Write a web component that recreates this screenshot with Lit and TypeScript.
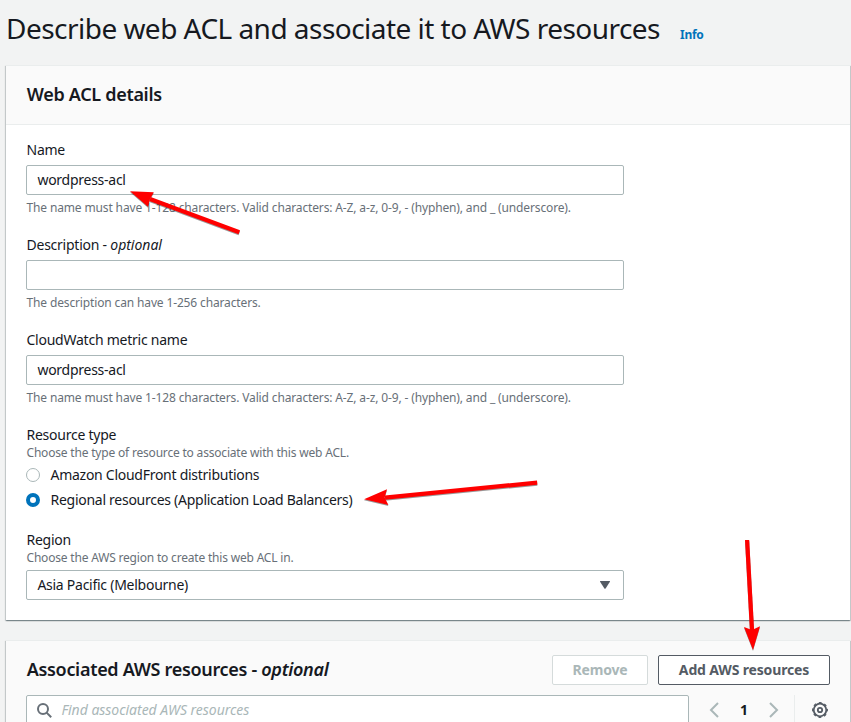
import { LitElement, html, css, svg, nothing } from "lit";
import { customElement, property, state } from "lit/decorators.js";
import { classMap } from "lit/directives/class-map.js";

@customElement("form-field")
class FormField extends LitElement {
  @property() label = "";
  @property({ type: Boolean }) optional = false;
  @property() description = "";
  @property() constraint = "";

  static styles = css`
    :host { display: block; width: 598px; }
    .label { font-size: 14px; line-height: 20px; letter-spacing: -0.24px; text-indent: 0.5px; }
    .optional { font-style: italic; letter-spacing: -0.02px; }
    .note { font-size: 12px; line-height: 15px; letter-spacing: -0.19px; text-indent: 0.5px; color: #687078; }
    .control { display: flex; flex-direction: column; margin-top: 5px; }
    .constraint { margin-top: 5px; letter-spacing: -0.14px; }
  `;

  render() {
    return html`
      <div class="label">${this.label}${this.optional ? html` - <span class="optional">optional</span>` : nothing}</div>
      ${this.description ? html`<div class="note">${this.description}</div>` : nothing}
      <div class="control"><slot></slot></div>
      ${this.constraint ? html`<div class="note constraint">${this.constraint}</div>` : nothing}
    `;
  }
}

const arrows = [
  { shaft: "M150 199 L239.3 232.2", head: "M130 191.3 L153.8 192.3 L150 199 L148 206.8 Z" },
  { shaft: "M385 497.6 L537.2 482.6", head: "M364 499.3 L387 489.2 L384.6 497.6 L388.4 505 Z" },
  { shaft: "M747.1 540 L752 630", head: "M753 650 L744 627 L752 630 L760 626.2 Z" },
];

@customElement("app-root")
export class AppRoot extends LitElement {
  @state() private resourceType = 1;

  static styles = css`
    :host {
      display: block; position: relative; box-sizing: border-box;
      width: 851px; height: 722px; overflow: hidden;
      background: #f2f3f3; color: #16191f;
      font-family: "Noto Sans", "Open Sans", sans-serif; font-size: 14px; line-height: 20px;
    }
    .page-title { display: flex; align-items: baseline; gap: 20px; padding: 10px 6px 19px; }
    h1 { margin: 0; font-size: 28px; line-height: 36px; font-weight: 400; letter-spacing: -0.53px; }
    .info { color: #0073bb; font-size: 12px; font-weight: 700; letter-spacing: -0.25px; }
    .card {
      margin: 0 1px 20px 6px; background: #fff; border-top: 1px solid #eaeded;
      box-shadow: 0 1px 1px 0 rgba(0,28,36,.3), 1px 1px 1px 0 rgba(0,28,36,.15), -1px 1px 1px 0 rgba(0,28,36,.15);
    }
    .head { box-sizing: border-box; height: 59px; padding: 14px 20px; background: #fafafa; border-bottom: 1px solid #eaeded; }
    h2 { margin: 0; font-size: 18px; line-height: 28px; font-weight: 600; letter-spacing: -0.31px; text-indent: 0.7px; }
    .body { display: flex; flex-direction: column; gap: 20px; padding: 15px 20px 20px; }
    .input {
      box-sizing: border-box; height: 30px; border: 1px solid #aab7b8; border-radius: 2px; background: #fff;
      padding: 4px 10px; letter-spacing: -0.26px; text-indent: 0.4px; display: flex; align-items: center; justify-content: space-between;
    }
    .caret { width: 10px; height: 8px; margin-right: 3px; fill: #545b64; }
    .radios { display: flex; flex-direction: column; gap: 5px; }
    .radio { display: flex; align-items: center; gap: 10.5px; height: 20px; letter-spacing: -0.27px; }
    .dot { box-sizing: border-box; width: 14px; height: 14px; border: 1px solid #aab7b8; border-radius: 50%; background: #fff; }
    .dot.on { border: 4px solid #0073bb; }
    .table { background: #fafafa; padding: 14px 20px 20px; }
    .row { display: flex; justify-content: space-between; }
    .buttons { display: flex; gap: 10px; }
    .button {
      box-sizing: border-box; height: 30px; padding: 4px 0; text-align: center; border: 1px solid #545b64; border-radius: 2px;
      background: #fff; color: #545b64; font-weight: 700; letter-spacing: -0.15px; width: 172px;
    }
    .button.disabled { color: #aab7b8; border-color: #d5dbdb; width: 96px; }
    .tools { margin-top: 10px; }
    .search { width: 663px; justify-content: flex-start; gap: 9px; padding-left: 10px; font-style: italic; color: #aab7b8; letter-spacing: -0.03px; }
    .search svg { width: 15px; height: 15px; }
    .pager { display: flex; align-items: center; height: 30px; }
    .pager svg { width: 10px; height: 16px; }
    .page { width: 50px; text-align: center; font-weight: 700; }
    .settings { display: flex; align-items: center; box-sizing: border-box; border-left: 1px solid #eaeded; height: 30px; margin-left: 15px; padding-left: 17px; padding-right: 2px; }
    .pager .settings svg { width: 16px; height: 16px; }
    .marks { position: absolute; left: 0; top: 0; width: 851px; height: 722px; pointer-events: none; filter: drop-shadow(0.5px 1px 0.5px rgba(0,0,0,.4)); }
  `;

  private radio(text: string, i: number) {
    return html`<div class="radio" @click=${() => (this.resourceType = i)}>
      <span class=${classMap({ dot: true, on: this.resourceType === i })}></span><span>${text}</span>
    </div>`;
  }

  render() {
    const rule = "The name must have 1-128 characters. Valid characters: A-Z, a-z, 0-9, - (hyphen), and _ (underscore).";
    return html`
      <div class="page-title"><h1>Describe web ACL and associate it to AWS resources</h1><span class="info">Info</span></div>
      <section class="card">
        <div class="head"><h2>Web ACL details</h2></div>
        <div class="body">
          <form-field label="Name" .constraint=${rule}><div class="input">wordpress-acl</div></form-field>
          <form-field label="Description" optional constraint="The description can have 1-256 characters."><div class="input"></div></form-field>
          <form-field label="CloudWatch metric name" .constraint=${rule}><div class="input">wordpress-acl</div></form-field>
          <form-field label="Resource type" description="Choose the type of resource to associate with this web ACL.">
            <div class="radios">
              ${this.radio("Amazon CloudFront distributions", 0)}
              ${this.radio("Regional resources (Application Load Balancers)", 1)}
            </div>
          </form-field>
          <form-field label="Region" description="Choose the AWS region to create this web ACL in.">
            <div class="input"><span>Asia Pacific (Melbourne)</span>
              <svg class="caret" viewBox="0 0 10 8"><path d="M0.3 0H9.7Q10.2 .2 9.9 .8L5.6 7.4Q5 8.2 4.4 7.4L.1 .8Q-.2 .2 .3 0Z" /></svg></div>
          </form-field>
        </div>
      </section>
      <section class="card">
        <div class="table">
          <div class="row">
            <h2>Associated AWS resources - <i>optional</i></h2>
            <div class="buttons"><div class="button disabled">Remove</div><div class="button">Add AWS resources</div></div>
          </div>
          <div class="row tools">
            <div class="input search">
              <svg viewBox="0 0 15 15" fill="none" stroke="#687078" stroke-width="2"><circle cx="6" cy="6" r="5" /><path d="M9.6 9.6L14.2 14.2" /></svg>
              <span>Find associated AWS resources</span>
            </div>
            <div class="pager">
              <svg viewBox="0 0 10 16" fill="none" stroke="#aab7b8" stroke-width="2"><path d="M9 1L2 8L9 15" /></svg>
              <span class="page">1</span>
              <svg viewBox="0 0 10 16" fill="none" stroke="#aab7b8" stroke-width="2"><path d="M1 1L8 8L1 15" /></svg>
              <span class="settings">
                <svg viewBox="0 0 16 16" fill="none" stroke="#545b64">
                  <circle cx="8" cy="8" r="6.3" stroke-width="1.8" />
                  <circle cx="8" cy="8" r="7.3" stroke-width="1.3" stroke-dasharray="2.9 2.833" stroke-dashoffset="1.45" />
                  <circle cx="8" cy="8" r="2.2" stroke-width="1.8" />
                </svg>
              </span>
            </div>
          </div>
        </div>
      </section>
      <svg class="marks" viewBox="0 0 851 722">
        ${arrows.map((a) => svg`<path d=${a.shaft} stroke="#f00" stroke-width="4.2" fill="none" /><path d=${a.head} fill="#f00" />`)}
      </svg>
    `;
  }
}
